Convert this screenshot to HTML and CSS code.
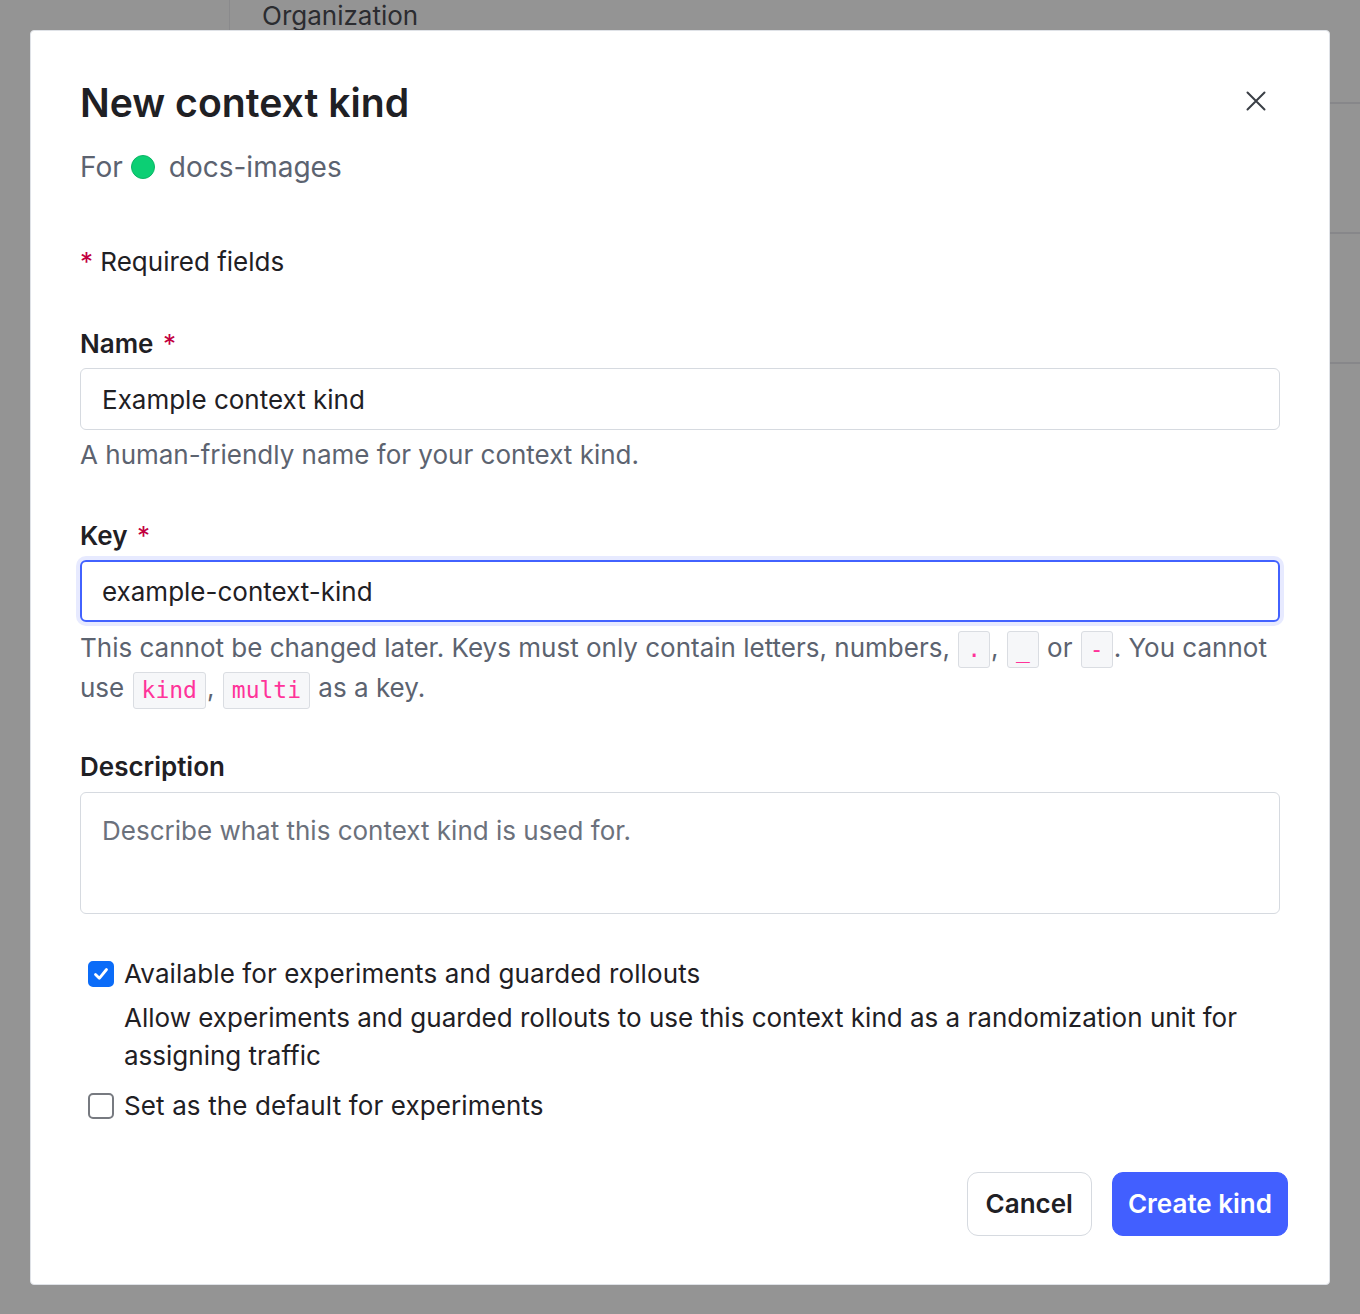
FILE: index.html
```html
<!DOCTYPE html>
<html lang="en">
<head>
<meta charset="utf-8">
<title>New context kind</title>
<link rel="stylesheet" href="styles.css">
</head>
<body>
<div class="page">
  <aside class="sidebar"></aside>
  <main class="main">
    <div class="page-head">Organization</div>
    <div class="row"></div>
    <div class="row"></div>
  </main>
</div>

<div class="modal" role="dialog" aria-labelledby="mtitle">
  <header class="modal-head">
    <div>
      <h1 id="mtitle" class="title">New context kind</h1>
      <p class="for-line">For <span class="dot"></span> docs-images</p>
    </div>
    <button class="close" aria-label="Close">
      <svg width="20" height="20" viewBox="0 0 20 20" fill="none" stroke="#3a3e45" stroke-width="2" stroke-linecap="round"><path d="M1.5 1.5 L18.5 18.5 M18.5 1.5 L1.5 18.5"/></svg>
    </button>
  </header>

  <p class="required-note"><span class="req">*</span> Required fields</p>

  <div class="field field-name">
    <label class="label">Name <span class="req">*</span></label>
    <div class="input">Example context kind</div>
    <p class="hint">A human-friendly name for your context kind.</p>
  </div>

  <div class="field field-key">
    <label class="label">Key <span class="req">*</span></label>
    <div class="input input-focus">example-context-kind</div>
    <p class="hint hint-key">This cannot be changed later. Keys must only contain letters, numbers, <code>.</code>, <code>_</code> or <code>-</code>. You cannot use <code>kind</code>, <code>multi</code> as a key.</p>
  </div>

  <div class="field field-desc">
    <label class="label">Description</label>
    <div class="textarea">Describe what this context kind is used for.</div>
  </div>

  <div class="checks">
    <div class="check">
      <span class="box box-on">
        <svg width="18" height="18" viewBox="0 0 18 18" fill="none" stroke="#fff" stroke-width="2.8" stroke-linecap="round" stroke-linejoin="round"><path d="M3.5 9.5 L7.3 13.3 L14.5 4.5"/></svg>
      </span>
      <div class="check-text">
        <div class="check-label">Available for experiments and guarded rollouts</div>
        <div class="check-desc">Allow experiments and guarded rollouts to use this context kind as a randomization unit for assigning traffic</div>
      </div>
    </div>
    <div class="check check-2">
      <span class="box"></span>
      <div class="check-text">
        <div class="check-label">Set as the default for experiments</div>
      </div>
    </div>
  </div>

  <footer class="actions">
    <button class="btn btn-secondary">Cancel</button>
    <button class="btn btn-primary">Create kind</button>
  </footer>
</div>
</body>
</html>
```

FILE: styles.css
```css
* { box-sizing: border-box; }
html, body { margin: 0; padding: 0; }
body {
  width: 1360px;
  height: 1314px;
  overflow: hidden;
  background: #949494;
  font-family: Inter, "Noto Sans", sans-serif;
  color: #1f2024;
  position: relative;
}

/* dimmed page behind the dialog */
.page {
  display: flex;
  height: 1314px;
}
.sidebar {
  width: 230px;
  border-right: 1.5px solid #8a8a8c;
  height: 30px;
}
.main {
  flex: 1;
}
.page-head {
  height: 104px;
  padding-left: 32px;
  font-size: 26px;
  line-height: 32px;
  color: #2b2c30;
  border-bottom: 2px solid #87878a;
}
.row {
  height: 130px;
  border-bottom: 2px solid #87878a;
}

/* dialog */
.modal {
  position: absolute;
  left: 30px;
  top: 30px;
  width: 1300px;
  height: 1255px;
  background: #fff;
  border: 1.5px solid #dfe2e7;
  border-radius: 4px;
  padding: 49px 49px 0 49px;
  display: flex;
  flex-direction: column;
}
.modal-head {
  display: flex;
  justify-content: space-between;
  align-items: flex-start;
}
.title {
  margin: 0;
  font-size: 39.2px;
  line-height: 46px;
  font-weight: 600;
  color: #1f2024;
}
.for-line {
  margin: 22px 0 0;
  font-size: 28px;
  line-height: 38px;
  color: #5c6370;
  display: flex;
  align-items: center;
}
.dot {
  display: inline-block;
  width: 24px;
  height: 24px;
  border-radius: 50%;
  background: #0ccf74;
  border: 1px solid #0bb565;
  margin: 0 14px 0 8px;
}
.close {
  margin: 11px 14px 0 0;
  padding: 0;
  border: 0;
  background: none;
  width: 20px;
  height: 20px;
  display: flex;
}

.required-note {
  margin: 57px 0 0;
  font-size: 26px;
  line-height: 38px;
  color: #1f2024;
}
.req { color: #c2003f; }

.field { display: flex; flex-direction: column; }
.field-name { margin-top: 44px; }
.field-key { margin-top: 43px; }
.field-desc { margin-top: 39px; }
.label {
  font-size: 26px;
  line-height: 38px;
  font-weight: 600;
  color: #1f2024;
}
.label .req { font-weight: 400; margin-left: 3px; }
.input {
  margin-top: 5px;
  height: 62px;
  border: 1.5px solid #d6dae0;
  border-radius: 6px;
  padding: 0 21px;
  display: flex;
  align-items: center;
  font-size: 26px;
  color: #1f2024;
}
.input-focus {
  border: 2.5px solid #4262ff;
  box-shadow: 0 0 0 4px #e7eaff;
  padding-left: 20px;
}
.hint {
  margin: 6px 0 0;
  font-size: 26px;
  line-height: 38px;
  color: #5c6370;
}
.hint-key {
  line-height: 40px;
}
code {
  display: inline-block;
  font-family: "DejaVu Sans Mono", "Liberation Mono", monospace;
  font-size: 23px;
  line-height: 35px;
  color: #ff3399;
  background: #f6f7f9;
  border: 1.5px solid #dadde2;
  border-radius: 3px;
  padding: 0 8px;
  margin: 0 1px;
  vertical-align: middle;
}
.textarea {
  margin-top: 6px;
  height: 122px;
  border: 1.5px solid #d6dae0;
  border-radius: 6px;
  padding: 19px 21px;
  font-size: 26px;
  line-height: 38px;
  color: #6b717c;
}

.checks {
  margin-top: 41px;
  display: flex;
  flex-direction: column;
}
.check {
  display: flex;
  align-items: flex-start;
  padding-left: 8px;
}
.check-2 { margin-top: 12px; }
.box {
  width: 26px;
  height: 26px;
  flex: none;
  border: 2px solid #777a80;
  border-radius: 5px;
  margin-top: 6px;
  margin-right: 10px;
  background: #fff;
  display: flex;
  align-items: center;
  justify-content: center;
}
.box-on {
  background: #0b6cf8;
  border-color: #0b6cf8;
}
.check-label {
  font-size: 26px;
  line-height: 38px;
  color: #1f2024;
  letter-spacing: 0.12px;
}
.check-desc {
  margin-top: 6px;
  font-size: 26px;
  line-height: 38px;
  color: #1f2024;
}

.actions {
  margin-top: 47px;
  display: flex;
  justify-content: flex-end;
  gap: 20px;
  margin-right: -8px;
}
.btn {
  height: 64px;
  border-radius: 11px;
  font-family: Inter, "Noto Sans", sans-serif;
  font-size: 26px;
  font-weight: 600;
  cursor: pointer;
}
.btn-secondary {
  background: #fff;
  color: #1f2024;
  border: 1.5px solid #d6dae0;
  padding: 0 18px;
}
.btn-primary {
  background: #425fff;
  color: #fff;
  border: 1.5px solid #425fff;
  padding: 0 15px;
}
```
